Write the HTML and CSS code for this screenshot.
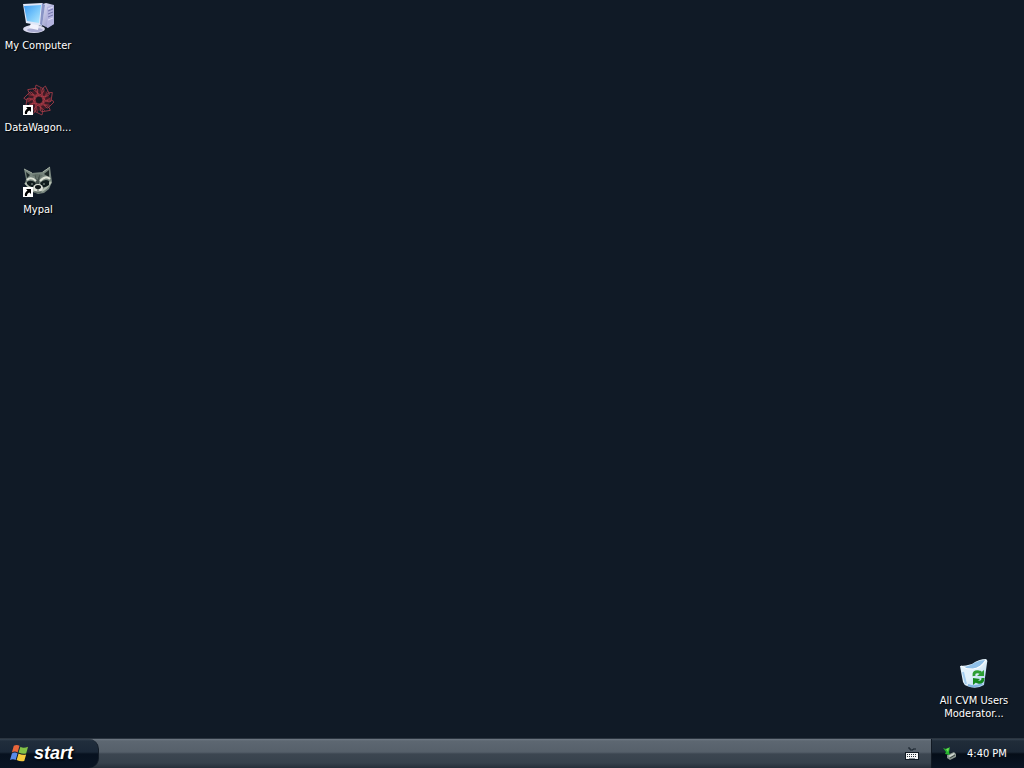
FILE: index.html
```html
<!DOCTYPE html>
<html lang="en">

<head>
    <meta charset="UTF-8">
    <meta name="viewport" content="width=device-width, initial-scale=1.0">
    <title>Desktop</title>
    <link rel="stylesheet" href="styles.css">
</head>

<body>

    <main class="desktop">
        <div class="icon-column">
            <a class="shortcut" href="#computer">
                <svg class="icon" viewBox="0 0 32 32" aria-hidden="true">
                    <defs>
                        <linearGradient id="screen" x1="0" y1="0" x2="1" y2="1">
                            <stop offset="0" stop-color="#3d9af0" />
                            <stop offset="0.5" stop-color="#74c4fb" />
                            <stop offset="1" stop-color="#b5eafd" />
                        </linearGradient>
                        <linearGradient id="case" x1="0" y1="0" x2="1" y2="1">
                            <stop offset="0" stop-color="#e8e9fb" />
                            <stop offset="1" stop-color="#8486bd" />
                        </linearGradient>
                    </defs>
                    <!-- tower -->
                    <path d="M18 3 L24 1 L32 3 L32 22 L26 26 L18 22 Z" fill="url(#case)" />
                    <path d="M25 5 L32 3 L32 22 L25 26 Z" fill="#b3b3de" />
                    <path d="M26 9 L31 7 M26 12 L31 10 M26 15 L31 13" stroke="#7476ad" stroke-width="1" />
                    <path d="M26 7 L31 5 M26 18 L31 16" stroke="#e0e0f6" stroke-width="1" />
                    <!-- stand -->
                    <ellipse cx="12" cy="27" rx="11" ry="4" fill="#d9daee" />
                    <ellipse cx="13" cy="28" rx="8" ry="2" fill="#a9abd0" />
                    <path d="M9 21 L17 22 L16 28 L7 26 Z" fill="#f2f2fc" />
                    <!-- monitor -->
                    <path d="M1 2 L20 1 L23 3 L20 24 L4 21 Z" fill="#dfe7f8" />
                    <path d="M20 1 L23 3 L20 24 L18 22 Z" fill="#8993c5" />
                    <path d="M2 4 L19 3 L17 21 L5 19 Z" fill="url(#screen)" />
                </svg>
                <span class="label">My Computer</span>
            </a>

            <a class="shortcut" href="#datawagon">
                <svg class="icon" viewBox="0 0 32 32" aria-hidden="true">
                    <defs>
                        <!-- one lobe, repeated round the centre -->
                        <g id="lobe" fill="none" stroke="#b8404c" stroke-width="0.7">
                            <path d="M19 12 Q10 7 13 1 L21 5 Q22 9 13 13" />
                            <path d="M16 11 L10 5" stroke="#97303c" />
                        </g>
                    </defs>
                    <circle cx="17" cy="16" r="11" fill="#3f1a25" />
                    <g transform="translate(1 0)">
                        <use href="#lobe" />
                        <use href="#lobe" transform="rotate(36 16 16)" />
                        <use href="#lobe" transform="rotate(72 16 16)" />
                        <use href="#lobe" transform="rotate(108 16 16)" />
                        <use href="#lobe" transform="rotate(144 16 16)" />
                        <use href="#lobe" transform="rotate(180 16 16)" />
                        <use href="#lobe" transform="rotate(216 16 16)" />
                        <use href="#lobe" transform="rotate(252 16 16)" />
                        <use href="#lobe" transform="rotate(288 16 16)" />
                        <use href="#lobe" transform="rotate(324 16 16)" />
                        <circle cx="16" cy="16" r="3" fill="#18171f" />
                    </g>
                    <g id="arrow">
                        <rect x="1" y="21" width="10" height="10" fill="#fff" />
                        <path d="M4 23 H9 V28 L7.500 26.500 Q5 27 5 30 H3 Q2 27 5.500 24.500 Z" fill="#000" />
                    </g>
                </svg>
                <span class="label">DataWagon...</span>
            </a>

            <a class="shortcut" href="#mypal">
                <svg class="icon" viewBox="0 0 32 32" aria-hidden="true">
                    <!-- ears and head -->
                    <path d="M2 3 L10 7 L20 6 L28 1 L29 9 L30 16 L27 23 L22 27 L16 28 L8 25 L3 18 L4 13 Z" fill="#77857d" />
                    <path d="M4 6 L8 9 L5 12 Z M27 4 L27 11 L22 8 Z" fill="#1e2928" />
                    <path d="M2 3 L10 7 M28 1 L21 6" stroke="#a6b1a5" stroke-width="1" />
                    <path d="M10 9 L15 8 L21 9 L17 13 Z" fill="#626f68" />
                    <path d="M13 8 L15 14 L18 8 L17 18 H14 Z" fill="#414d49" />
                    <!-- brows and cheeks -->
                    <path d="M5 14 Q9 10 14 15 M18 15 Q24 9 28 13" fill="none" stroke="#dce1d5" stroke-width="2" />
                    <path d="M3 17 L9 22 L12 25 M29 16 L24 22 L20 25" fill="none" stroke="#b3bdb0" stroke-width="2" />
                    <!-- mask -->
                    <path d="M5 16 Q9 13 14 17 L12 21 Q8 22 5 18 Z M18 17 Q23 12 27 15 L27 19 Q23 22 20 21 Z" fill="#101b1c" />
                    <ellipse cx="16" cy="22" rx="5" ry="4" fill="#dce0d7" />
                    <ellipse cx="16" cy="21" rx="3" ry="2" fill="#111819" />
                    <path d="M16 23 V25 M13 26 H19" stroke="#495650" />
                    <circle cx="10" cy="18" r="1" fill="#66736d" />
                    <circle cx="22" cy="18" r="1" fill="#66736d" />
                    <use href="#arrow" />
                </svg>
                <span class="label">Mypal</span>
            </a>
        </div>

        <div class="icon-column bin-column">
            <a class="shortcut" href="#bin">
                <svg class="icon" viewBox="0 0 32 32" aria-hidden="true">
                    <defs>
                        <linearGradient id="bin" x1="0" y1="0" x2="1" y2="1">
                            <stop offset="0" stop-color="#e3f3fd" />
                            <stop offset="0.5" stop-color="#e2f2fb" />
                            <stop offset="1" stop-color="#9cc6ea" />
                        </linearGradient>
                    </defs>
                    <path d="M2 9 Q8 9 14 7 Q21 2 28 2 Q30 3 29 6 L26 28 Q18 33 9 29 Q6 28 5 25 Z" fill="url(#bin)" />
                    <path d="M5 10 Q12 9 16 6 Q22 3 27 3 Q23 10 15 12 Q9 12 5 10 Z" fill="#8fc0e8" />
                    <path d="M3 9 Q9 13 15 12 Q23 11 28 3" fill="none" stroke="#fff" stroke-width="1" />
                    <path d="M5 15 L8 27" stroke="#a3cdef" stroke-width="2" />
                    <path d="M10 28 Q17 31 24 27" fill="none" stroke="#7fb2df" stroke-width="2" />
                    <!-- recycle arrows -->
                    <path d="M16 19 Q15 14 21 15 Q22 15 23 16" fill="none" stroke="#2c9e33" stroke-width="3" />
                    <path d="M26 13 L26 19 L19 19 Z" fill="#2c9e33" />
                    <path d="M25 21 Q25 26 20 25 Q19 25 18 24" fill="none" stroke="#15891f" stroke-width="3" />
                    <path d="M15 28 L15 21 L22 22 Z" fill="#15891f" />
                </svg>
                <span class="label">All CVM Users Moderator...</span>
            </a>
        </div>
    </main>

    <footer class="taskbar">
        <button type="button" class="start-btn">
            <svg class="flag" viewBox="0 0 20 20" aria-hidden="true">
                <path d="M4 3 Q7 1 10 3 L8 10 Q5 8 2 10 Z" fill="#e9663b" />
                <path d="M11 4 Q14 6 19 4 L17 11 Q13 12 9 10 Z" fill="#83c247" />
                <path d="M2 11 Q5 9 8 11 L6 18 Q3 16 0 18 Z" fill="#598be9" />
                <path d="M9 11 Q13 13 17 12 L15 19 Q11 20 7 18 Z" fill="#f5cb3e" />
            </svg>
            <span>start</span>
        </button>

        <button type="button" class="keyboard-btn" aria-label="Keyboard">
            <svg class="keyboard" viewBox="0 0 14 14" aria-hidden="true">
                <path d="M3 1 H5 V3 H8 V2 H11" fill="none" stroke="#17212b" />
                <rect x="0" y="5" width="14" height="8" fill="#111a23" />
                <rect x="1" y="6" width="12" height="6" fill="#f5f5f5" />
                <path d="M2 7.500 H12 M2 9.500 H12" stroke="#26303a" stroke-dasharray="1 1" />
                <path d="M4 11.500 H10" stroke="#8b9299" />
            </svg>
        </button>

        <div class="tray">
            <button type="button" class="tray-btn" aria-label="Safely remove hardware">
                <svg class="tray-icon" viewBox="0 0 16 16" aria-hidden="true">
                    <path d="M5 9 L12 6 L14 8 L14 11 L8 14 L5 12 Z" fill="#89958e" />
                    <path d="M6 10 L12 7 L13 8 L8 11 Z" fill="#d0d8d1" />
                    <path d="M8 12 L13 9" stroke="#3d4844" />
                    <path d="M1 2 L4 3 L8 1 L7 6 L8 9 L3 8 L4 6 Z" fill="#27b52f" />
                    <path d="M4 3 L7 2 L6 6 Z" fill="#72df57" />
                </svg>
            </button>
            <time class="clock">4:40 PM</time>
        </div>
    </footer>

</body>

</html>
```
FILE: styles.css
```css
* {
    margin: 0px;
    box-sizing: border-box;
}

body {
    height: 100vh;
    display: flex;
    flex-direction: column;
    background-color: #101a26;
    color: white;
    font-family: Tahoma, "DejaVu Sans Condensed", "Noto Sans", sans-serif;
    font-size: 11px;
    line-height: 13px;
}

button {
    padding: 0px;
    border: none;
    background: none;
    color: inherit;
    font: inherit;
}

svg {
    display: block;
}

.desktop {
    flex: 1;
    display: flex;
    justify-content: space-between;
    padding-top: 2px;
}

.icon-column {
    width: 76px;
    display: flex;
    flex-direction: column;
    gap: 32px;
}

.bin-column {
    justify-content: flex-end;
    margin-right: 12px;
    padding-bottom: 18px;
}

.shortcut {
    display: flex;
    flex-direction: column;
    align-items: center;
    gap: 5px;
    color: white;
    text-align: center;
    text-decoration: none;
}

.icon {
    width: 32px;
    height: 32px;
}

.label {
    text-shadow: 1px 1px 1px black;
}

.taskbar {
    height: 30px;
    display: flex;
    align-items: stretch;
    border-top: 1px solid #2b3540;
    background: linear-gradient(#707a85 0px, #5d6771 2px, #56606b 13px, #3c4651 15px, #36414c 24px, #252f3a 29px);
}

.start-btn {
    width: 99px;
    display: flex;
    align-items: center;
    gap: 5px;
    padding: 0px 0px 2px 10px;
    border-right: 1px solid #141d28;
    border-radius: 0px 10px 10px 0px;
    background: linear-gradient(#364350 0px, #202d3c 2px, #1b2838 13px, #07111f 15px, #091524 29px);
    font-family: "Liberation Sans", Arial, sans-serif;
    font-size: 18px;
    font-style: italic;
    font-weight: bold;
    line-height: 20px;
    text-shadow: 1px 1px 2px black;
}

.flag {
    width: 19px;
    height: 19px;
}

.keyboard-btn {
    margin-left: auto;
    padding: 0px 12px;
}

.keyboard {
    width: 14px;
    height: 14px;
}

.tray {
    width: 93px;
    display: flex;
    align-items: center;
    gap: 9px;
    padding-left: 10px;
    border-left: 1px solid #111923;
    background: linear-gradient(#364350 0px, #202c39 2px, #1b2735 13px, #050d18 15px, #0a1524 29px);
}

.tray-icon {
    width: 16px;
    height: 16px;
}

.clock {
    white-space: nowrap;
}
```
